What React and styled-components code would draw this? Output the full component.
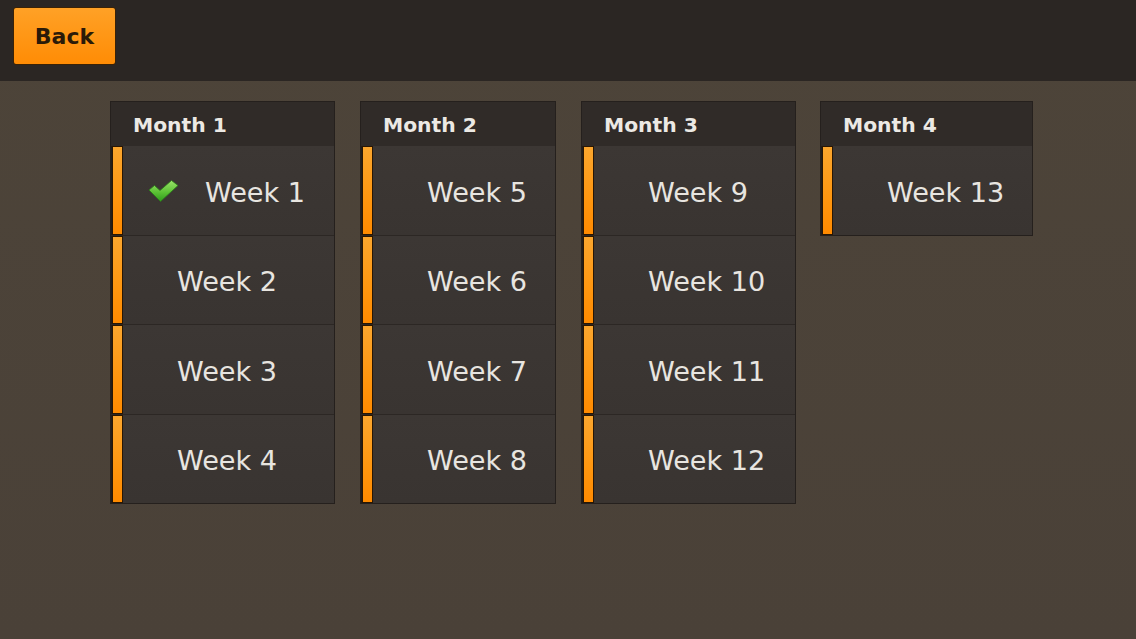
import React from "react";
import styled, { createGlobalStyle } from "styled-components";

const GlobalStyle = createGlobalStyle`
  html, body {
    margin: 0;
    padding: 0;
    background: #4a4138;
  }
  body {
    font-family: "DejaVu Sans", "Liberation Sans", sans-serif;
  }
`;

const Page = styled.div`
  width: 1136px;
  height: 639px;
  background: linear-gradient(180deg, #4d4439 0%, #4a4138 100%);
  display: flex;
  flex-direction: column;
  overflow: hidden;
`;

const TopBar = styled.div`
  height: 81px;
  box-sizing: border-box;
  padding: 7px 13px;
  background: #2b2623;
  display: flex;
  align-items: flex-start;
`;

const BackButton = styled.button`
  width: 103px;
  height: 58px;
  border: 1px solid #3a2206;
  border-radius: 3px;
  background: linear-gradient(180deg, #ffa126 0%, #ff8c05 100%);
  color: #2a1a08;
  font-family: inherit;
  font-weight: bold;
  font-size: 22px;
  padding: 0;
  cursor: pointer;
`;

const Board = styled.div`
  display: flex;
  align-items: flex-start;
  padding: 20px 0 0 110px;
`;

const Column = styled.div`
  width: ${(p) => p.$w}px;
  margin-right: ${(p) => p.$gap}px;
  box-sizing: border-box;
  background: #2c2724;
  border: 1px solid #25201d;
  display: flex;
  flex-direction: column;
`;

const Header = styled.div`
  height: 44px;
  display: flex;
  align-items: center;
  padding-left: 22px;
  padding-top: 2px;
  box-sizing: border-box;
  background: #302b28;
  color: #ece9e4;
  font-weight: bold;
  font-size: 20.3px;
`;

const Row = styled.div`
  height: 88.5px;
  display: flex;
  margin-top: ${(p) => (p.$first ? 0 : 1)}px;
  background: #221d1a;
`;

const Stripe = styled.div`
  width: 11px;
  margin-left: 1px;
  box-sizing: border-box;
  border: 1px solid #2a1703;
  background: linear-gradient(180deg, #fba62e 0%, #ff960f 60%, #ff8a00 100%);
`;

const Cell = styled.div`
  flex: 1;
  display: flex;
  align-items: center;
  padding-left: ${(p) => (p.$done ? 25 : 54)}px;
  padding-top: 4px;
  box-sizing: border-box;
  background: linear-gradient(180deg, #3c3734 0%, #393431 100%);
  color: #e8e5e0;
  font-size: 27.1px;
  white-space: nowrap;
`;

const Check = styled.svg`
  width: 31px;
  height: 24px;
  margin-right: 26px;
  margin-top: -3px;
  flex-shrink: 0;
`;

const CheckIcon = () => (
  <Check viewBox="0 0 31 24">
    <defs>
      <linearGradient id="chk" x1="0" y1="0" x2="0" y2="1">
        <stop offset="0" stopColor="#9be26a" />
        <stop offset="0.55" stopColor="#5cc235" />
        <stop offset="1" stopColor="#2f9a1c" />
      </linearGradient>
    </defs>
    <path
      d="M1 11 L6.5 6.5 L12 11.5 L23.5 1.5 L30 6.5 L12.5 22.5 Z"
      fill="url(#chk)"
      stroke="#2b7d18"
      strokeWidth="0.8"
      strokeLinejoin="round"
    />
  </Check>
);

const months = [
  { name: "Month 1", width: 225, gap: 25, weeks: [1, 2, 3, 4] },
  { name: "Month 2", width: 196, gap: 25, weeks: [5, 6, 7, 8] },
  { name: "Month 3", width: 215, gap: 24, weeks: [9, 10, 11, 12] },
  { name: "Month 4", width: 213, gap: 0, weeks: [13] },
];

const done = [1];

export default function App() {
  return (
    <>
      <GlobalStyle />
      <Page>
        <TopBar>
          <BackButton>Back</BackButton>
        </TopBar>
        <Board>
          {months.map((m) => (
            <Column key={m.name} $w={m.width} $gap={m.gap}>
              <Header>{m.name}</Header>
              {m.weeks.map((w, i) => {
                const isDone = done.includes(w);
                return (
                  <Row key={w} $first={i === 0}>
                    <Stripe />
                    <Cell $done={isDone}>
                      {isDone && <CheckIcon />}
                      Week {w}
                    </Cell>
                  </Row>
                );
              })}
            </Column>
          ))}
        </Board>
      </Page>
    </>
  );
}
